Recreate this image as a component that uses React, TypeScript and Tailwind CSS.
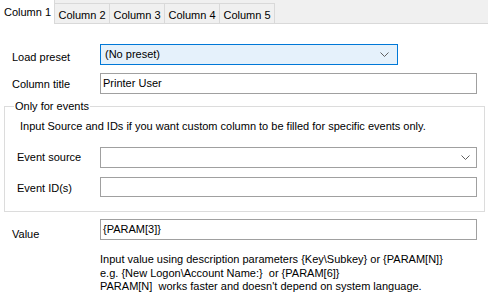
import React from "react";

const Chevron = () => (
  <svg width="9" height="5" viewBox="0 0 9 5" className="block">
    <path d="M0.5 0.5 L4.5 4.5 L8.5 0.5" fill="none" stroke="#5f5f5f" strokeWidth="1" />
  </svg>
);

export default function App() {
  const tabs = ["Column 2", "Column 3", "Column 4", "Column 5"];
  return (
    <div
      className="w-[488px] h-[300px] bg-white text-black text-[11px] leading-[13px] whitespace-nowrap overflow-hidden"
      style={{ fontFamily: '"Liberation Sans", Arial, sans-serif' }}
    >
      {/* Tab strip */}
      <div className="flex h-[24px] bg-[#f0f0f0] border-b border-[#d9d9d9]">
        <div className="w-[55px] h-[24px] bg-white border-r border-[#d9d9d9] flex items-start pt-[6px] pl-[4px]">
          Column 1
        </div>
        {tabs.map((t) => (
          <div
            key={t}
            className="w-[55px] h-[20px] mt-[3px] border-t border-r border-[#d9d9d9] bg-[#f0f0f0] flex items-start pt-[5px] justify-center"
          >
            {t}
          </div>
        ))}
      </div>

      {/* Content */}
      <div className="pl-[12px]">
        <div className="flex items-start mt-[20px]">
          <div className="w-[88px] pt-[7px]">Load preset</div>
          <div className="w-[298px] h-[21px] border border-[#0078d7] bg-[#e5f1fb] flex items-center justify-between pl-[4px] pr-[8px]">
            <span>(No preset)</span>
            <Chevron />
          </div>
        </div>
        <div className="flex items-start mt-[8px]">
          <div className="w-[88px] pt-[5px]">Column title</div>
          <div className="w-[377px] h-[21px] border border-[#a0a0a0] flex items-center pl-[2px]">
            Printer User
          </div>
        </div>
      </div>

      {/* Group box */}
      <div className="relative ml-[4px] mt-[12px] w-[481px] h-[106px] border border-[#dcdcdc]">
        <div className="absolute left-[9px] top-[-7px] bg-white px-[1px]">Only for events</div>
        <div className="pl-[15px] pt-[13px]">Input Source and IDs if you want custom column to be filled for specific events only.</div>
        <div className="flex items-start mt-[14px] pl-[12px]">
          <div className="w-[83px] pt-[4px]">Event source</div>
          <div className="w-[377px] h-[21px] border border-[#a0a0a0] flex items-center justify-end pr-[6px]">
            <Chevron />
          </div>
        </div>
        <div className="flex items-start mt-[9px] pl-[12px]">
          <div className="w-[83px] pt-[5px]">Event ID(s)</div>
          <div className="w-[377px] h-[20px] border border-[#a0a0a0]"></div>
        </div>
      </div>

      <div className="pl-[12px]">
        <div className="flex items-start mt-[7px]">
          <div className="w-[88px] pt-[9px]">Value</div>
          <div className="w-[377px] h-[21px] border border-[#a0a0a0] flex items-center pl-[2px]">
            {"{PARAM[3]}"}
          </div>
        </div>
        <div className="pl-[88px] mt-[12px] leading-[13.5px] whitespace-pre">
          <div>{"Input value using description parameters {Key\\Subkey} or {PARAM[N]}"}</div>
          <div>{"e.g. {New Logon\\Account Name:}  or {PARAM[6]}"}</div>
          <div>{"PARAM[N]  works faster and doesn't depend on system language."}</div>
        </div>
      </div>
    </div>
  );
}
